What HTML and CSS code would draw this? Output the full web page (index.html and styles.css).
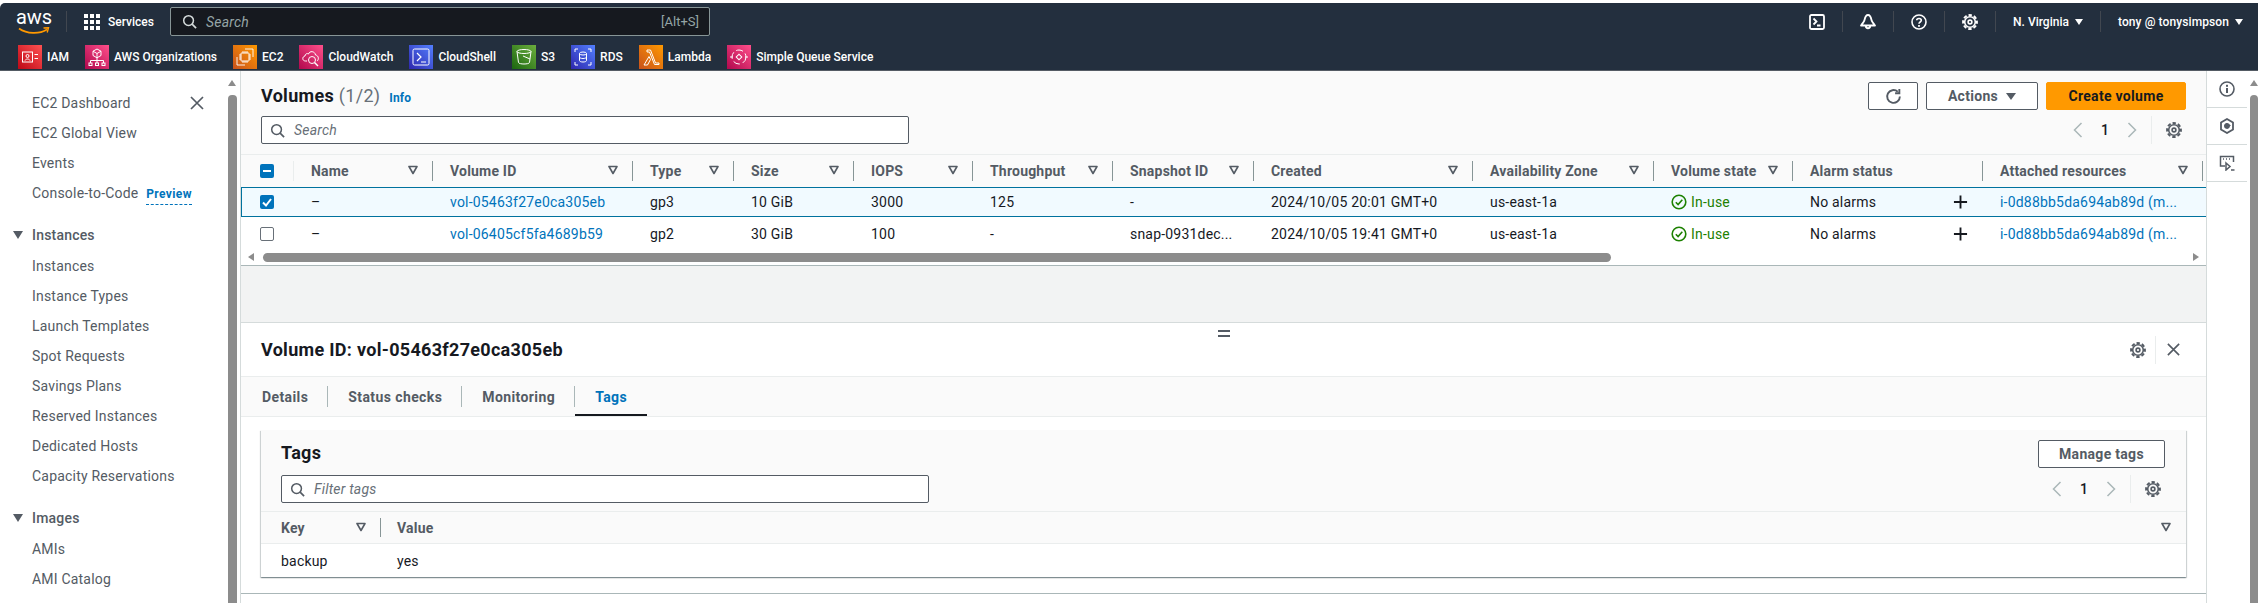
FILE: index.html
```html
<!DOCTYPE html>
<html>
<head>
<meta name="viewport" content="width=device-width, initial-scale=1">
<link rel="stylesheet" href="styles.css">
</head>
<body>

<svg class="defs" width="0" height="0">
  <defs>
    <symbol id="i-search" viewBox="0 0 16 16"><circle cx="7" cy="7" r="5.2" fill="none" stroke="currentColor" stroke-width="1.6"/><path d="M10.8 10.8L15 15" stroke="currentColor" stroke-width="1.8" fill="none"/></symbol>
    <symbol id="i-gear" viewBox="0 0 16 16"><circle cx="8" cy="8" r="5.3" fill="none" stroke="currentColor" stroke-width="1.6"/><circle cx="8" cy="8" r="6.9" fill="none" stroke="currentColor" stroke-width="2" stroke-dasharray="3.4 2.02" stroke-dashoffset="1.7"/><circle cx="8" cy="8" r="1.9" fill="none" stroke="currentColor" stroke-width="1.6"/></symbol>
    <symbol id="i-filter" viewBox="0 0 10 10"><path d="M1 1.5h8L5 8.5z" fill="none" stroke="currentColor" stroke-width="1.6" stroke-linejoin="round"/></symbol>
    <symbol id="i-close" viewBox="0 0 16 16"><path d="M2 2l12 12M14 2L2 14" stroke="currentColor" stroke-width="1.7" fill="none"/></symbol>
    <symbol id="i-left" viewBox="0 0 10 16"><path d="M8.5 1L1.5 8l7 7" stroke="currentColor" stroke-width="1.5" fill="none"/></symbol>
    <symbol id="i-right" viewBox="0 0 10 16"><path d="M1.5 1l7 7-7 7" stroke="currentColor" stroke-width="1.5" fill="none"/></symbol>
    <symbol id="i-ok" viewBox="0 0 16 16"><circle cx="8" cy="8" r="6.8" fill="none" stroke="currentColor" stroke-width="1.6"/><path d="M4.8 8.2l2.3 2.3 4.2-4.7" fill="none" stroke="currentColor" stroke-width="1.6"/></symbol>
    <symbol id="i-plus" viewBox="0 0 16 16"><path d="M8 1v14M1 8h14" stroke="currentColor" stroke-width="2" fill="none"/></symbol>
  </defs>
</svg>

<header class="topnav">
  <div class="nav-row">
    <div class="logo">
      <span class="logo-text">aws</span>
      <svg class="logo-smile" width="32" height="8" viewBox="0 0 32 8"><path d="M1 1.5c8 5.5 20 6 28 1" fill="none" stroke="#f90" stroke-width="1.8"/><path d="M25.5 1l5-.3-1.3 4.8" fill="none" stroke="#f90" stroke-width="1.4"/></svg>
    </div>
    <span class="nav-sep nav-sep-logo"></span>
    <svg class="grid-icon" width="16" height="16" viewBox="0 0 16 16" fill="#fff"><rect width="4" height="4"/><rect x="6" width="4" height="4"/><rect x="12" width="4" height="4"/><rect y="6" width="4" height="4"/><rect x="6" y="6" width="4" height="4"/><rect x="12" y="6" width="4" height="4"/><rect y="12" width="4" height="4"/><rect x="6" y="12" width="4" height="4"/><rect x="12" y="12" width="4" height="4"/></svg>
    <span class="nav-services">Services</span>
    <div class="nav-search">
      <svg width="15" height="15"><use href="#i-search"/></svg>
      <span class="nav-search-text">Search</span>
      <span class="nav-search-key">[Alt+S]</span>
    </div>
    <div class="nav-right">
      <svg class="nav-icon" width="16" height="16" viewBox="0 0 16 16"><rect x="1" y="1" width="14" height="14" rx="1.5" fill="none" stroke="#fff" stroke-width="1.8"/><path d="M4.5 4.5L7.5 7.5l-3 3M8 11.5h3.5" fill="none" stroke="#fff" stroke-width="1.8"/></svg>
      <span class="nav-sep"></span>
      <svg class="nav-icon" width="16" height="16" viewBox="0 0 16 16"><path d="M8 1c2.5 0 3 2.500 3.500 5 .3 1.500 1.500 3 3.500 5.500H1C3 9 4.200 7.500 4.500 6 5 3.500 5.500 1 8 1zM5.800 12c0 3 4.400 3 4.400 0" fill="none" stroke="#fff" stroke-width="1.800" stroke-linejoin="round"/></svg>
      <span class="nav-sep"></span>
      <svg class="nav-icon" width="16" height="16" viewBox="0 0 16 16"><circle cx="8" cy="8" r="7" fill="none" stroke="#fff" stroke-width="1.6"/><path d="M5.700 6.300C5.700 3.800 10.300 3.800 10.300 6.300 10.300 8 8 8 8 9.800" fill="none" stroke="#fff" stroke-width="1.6"/><rect x="7.100" y="11" width="1.800" height="1.800" fill="#fff"/></svg>
      <span class="nav-sep"></span>
      <svg class="nav-icon nav-gear" width="16" height="16"><use href="#i-gear"/></svg>
      <span class="nav-sep"></span>
      <span class="nav-menu">N. Virginia <i class="caret"></i></span>
      <span class="nav-sep"></span>
      <span class="nav-menu nav-user">tony @ tonysimpson <i class="caret"></i></span>
    </div>
  </div>
  <div class="fav-row">
    <div class="fav"><svg class="fav-icon" viewBox="0 0 24 24"><defs><linearGradient id="g-red" x1="0" y1="1" x2="1" y2="0"><stop offset="0" stop-color="#bd0816"/><stop offset="1" stop-color="#ff5252"/></linearGradient></defs><rect width="24" height="24" fill="url(#g-red)"/><rect x="4.500" y="7" width="10" height="10" fill="none" stroke="#fff"/><circle cx="9.500" cy="11" r="1.500" fill="none" stroke="#fff"/><path d="M7 15.500c1-2 4-2 5 0M16.500 9.500H20M16.500 13.500H20" stroke="#fff" fill="none"/></svg><span>IAM</span></div>
    <div class="fav"><svg class="fav-icon" viewBox="0 0 24 24"><defs><linearGradient id="g-pink" x1="0" y1="1" x2="1" y2="0"><stop offset="0" stop-color="#b0084d"/><stop offset="1" stop-color="#ff4f8b"/></linearGradient></defs><rect width="24" height="24" fill="url(#g-pink)"/><path d="M12 4l4 2.200v4.300L12 12.800 8 10.500V6.200zM8 6.200l4 2.300 4-2.300M12 8.500v4.300M12 12.800v2.700M5.500 18v-2.500h13V18M12 15.500V18" fill="none" stroke="#fff"/><rect x="4" y="18" width="3" height="2.500" fill="none" stroke="#fff"/><rect x="10.500" y="18" width="3" height="2.500" fill="none" stroke="#fff"/><rect x="17" y="18" width="3" height="2.500" fill="none" stroke="#fff"/></svg><span>AWS Organizations</span></div>
    <div class="fav"><svg class="fav-icon" viewBox="0 0 24 24"><defs><linearGradient id="g-orange" x1="0" y1="1" x2="1" y2="0"><stop offset="0" stop-color="#c8511b"/><stop offset="1" stop-color="#f90"/></linearGradient></defs><rect width="24" height="24" fill="url(#g-orange)"/><rect x="8" y="8" width="8" height="8" rx=".5" fill="none" stroke="#fff"/><path d="M10 6v2M12 6v2M14 6v2M10 16v2M12 16v2M14 16v2M6 10h2M6 12h2M6 14h2M16 10h2M16 12h2M16 14h2M4 12v8h8M12 4h8v8" fill="none" stroke="#fff" stroke-width=".9"/></svg><span>EC2</span></div>
    <div class="fav"><svg class="fav-icon" viewBox="0 0 24 24"><rect width="24" height="24" fill="url(#g-pink)"/><path d="M8 16H6.500C3 16 3 11.500 6 11c0-2 2-3 3.500-2 1-3.500 6.500-3 7 1 3.500.5 3.500 5 1.500 6" fill="none" stroke="#fff"/><circle cx="13" cy="15" r="3.500" fill="none" stroke="#fff"/><path d="M15.500 17.500L19 21" stroke="#fff" stroke-width="1.400"/></svg><span>CloudWatch</span></div>
    <div class="fav"><svg class="fav-icon" viewBox="0 0 24 24"><defs><linearGradient id="g-blue" x1="0" y1="1" x2="1" y2="0"><stop offset="0" stop-color="#2e27ad"/><stop offset="1" stop-color="#527fff"/></linearGradient></defs><rect width="24" height="24" fill="url(#g-blue)"/><rect x="4" y="4" width="16" height="16" rx="1.500" fill="none" stroke="#fff"/><path d="M8 8l4 4-4 4M12 17h5" fill="none" stroke="#fff" stroke-width="1.200"/></svg><span>CloudShell</span></div>
    <div class="fav"><svg class="fav-icon" viewBox="0 0 24 24"><defs><linearGradient id="g-green" x1="0" y1="1" x2="1" y2="0"><stop offset="0" stop-color="#1b660f"/><stop offset="1" stop-color="#6cae3e"/></linearGradient></defs><rect width="24" height="24" fill="url(#g-green)"/><ellipse cx="12" cy="6.500" rx="7" ry="2" fill="none" stroke="#fff"/><path d="M5 6.500l1.500 11c.5 2 10.500 2 11 0l1.500-11M11 11l7 3" fill="none" stroke="#fff"/></svg><span>S3</span></div>
    <div class="fav"><svg class="fav-icon" viewBox="0 0 24 24"><rect width="24" height="24" fill="url(#g-blue)"/><ellipse cx="12" cy="8.500" rx="3.500" ry="1.500" fill="none" stroke="#fff"/><path d="M8.500 8.500v7c0 2 7 2 7 0v-7M8.500 12c0 2 7 2 7 0M4 7V4h3M20 7V4h-3M4 17v3h3M20 17v3h-3" fill="none" stroke="#fff"/></svg><span>RDS</span></div>
    <div class="fav"><svg class="fav-icon" viewBox="0 0 24 24"><rect width="24" height="24" fill="url(#g-orange)"/><path d="M8 5h3.500l5 13H20v1.500h-4.500L10.500 7H8zM10 11.500l1.500 3L8.500 20H5z" fill="none" stroke="#fff"/></svg><span>Lambda</span></div>
    <div class="fav"><svg class="fav-icon" viewBox="0 0 24 24"><rect width="24" height="24" fill="url(#g-pink)"/><circle cx="12" cy="12" r="7" fill="none" stroke="#fff" stroke-dasharray="7 3"/><rect x="10" y="10" width="4" height="4" fill="none" stroke="#fff" transform="rotate(45 12 12)"/><path d="M3 12h3M18 12h3" stroke="#fff"/></svg><span>Simple Queue Service</span></div>
  </div>
</header>

<div class="app">
  <aside class="sidebar">
    <nav class="side-nav">
      <div class="side-close"><svg width="16" height="16"><use href="#i-close"/></svg></div>
      <a class="side-link">EC2 Dashboard</a>
      <a class="side-link">EC2 Global View</a>
      <a class="side-link">Events</a>
      <a class="side-link">Console-to-Code <b class="preview">Preview</b></a>
      <div class="side-head"><i class="side-caret"></i>Instances</div>
      <a class="side-link">Instances</a>
      <a class="side-link">Instance Types</a>
      <a class="side-link">Launch Templates</a>
      <a class="side-link">Spot Requests</a>
      <a class="side-link">Savings Plans</a>
      <a class="side-link">Reserved Instances</a>
      <a class="side-link">Dedicated Hosts</a>
      <a class="side-link">Capacity Reservations</a>
      <div class="side-head"><i class="side-caret"></i>Images</div>
      <a class="side-link">AMIs</a>
      <a class="side-link">AMI Catalog</a>
    </nav>
    <div class="scroll-v"><i class="arrow-up"></i><i class="scroll-thumb"></i></div>
  </aside>

  <main class="main">
    <section class="list-panel">
      <div class="list-head">
        <h1 class="title">Volumes <span class="count">(1/2)</span> <a class="info">Info</a></h1>
        <div class="actions">
          <button class="btn btn-refresh"><svg width="17" height="17" viewBox="0 0 16 16"><path d="M14 8a6 6 0 1 1-2-4.500" fill="none" stroke="#545b64" stroke-width="1.800"/><path d="M13.500 1v4h-4" fill="none" stroke="#545b64" stroke-width="1.800"/></svg></button>
          <button class="btn btn-actions">Actions <i class="caret caret-gray"></i></button>
          <button class="btn btn-primary">Create volume</button>
        </div>
      </div>
      <div class="tool-row">
        <div class="search search-wide"><svg width="15" height="15"><use href="#i-search"/></svg><span>Search</span></div>
        <div class="pager">
          <svg width="10" height="16"><use href="#i-left"/></svg>
          <span class="pg-num">1</span>
          <svg width="10" height="16"><use href="#i-right"/></svg>
          <span class="pg-sep"></span>
          <svg class="pg-gear" width="16" height="16"><use href="#i-gear"/></svg>
        </div>
      </div>
      <div class="vtable">
        <div class="vrow vhead">
          <div class="cell cell-check sep-light"><span class="check check-on"><i class="dash"></i></span></div>
          <div class="cell sep">Name<svg class="flt" width="10" height="10"><use href="#i-filter"/></svg></div>
          <div class="cell sep">Volume ID<svg class="flt" width="10" height="10"><use href="#i-filter"/></svg></div>
          <div class="cell sep">Type<svg class="flt" width="10" height="10"><use href="#i-filter"/></svg></div>
          <div class="cell sep">Size<svg class="flt" width="10" height="10"><use href="#i-filter"/></svg></div>
          <div class="cell sep">IOPS<svg class="flt" width="10" height="10"><use href="#i-filter"/></svg></div>
          <div class="cell sep">Throughput<svg class="flt" width="10" height="10"><use href="#i-filter"/></svg></div>
          <div class="cell sep">Snapshot ID<svg class="flt" width="10" height="10"><use href="#i-filter"/></svg></div>
          <div class="cell sep">Created<svg class="flt" width="10" height="10"><use href="#i-filter"/></svg></div>
          <div class="cell sep">Availability Zone<svg class="flt" width="10" height="10"><use href="#i-filter"/></svg></div>
          <div class="cell sep">Volume state<svg class="flt" width="10" height="10"><use href="#i-filter"/></svg></div>
          <div class="cell sep">Alarm status</div>
          <div class="cell sep">Attached resources<svg class="flt" width="10" height="10"><use href="#i-filter"/></svg></div>
        </div>
        <div class="vrow vdata vselected">
          <div class="cell cell-check"><span class="check check-on"><svg width="14" height="14" viewBox="0 0 14 14"><path d="M3 7.500l3 3 5-6.500" fill="none" stroke="#fff" stroke-width="2"/></svg></span></div>
          <div class="cell">–</div>
          <div class="cell"><a class="link">vol-05463f27e0ca305eb</a></div>
          <div class="cell">gp3</div>
          <div class="cell">10 GiB</div>
          <div class="cell">3000</div>
          <div class="cell">125</div>
          <div class="cell">-</div>
          <div class="cell">2024/10/05 20:01 GMT+0</div>
          <div class="cell">us-east-1a</div>
          <div class="cell state"><svg width="16" height="16"><use href="#i-ok"/></svg>In-use</div>
          <div class="cell">No alarms<svg class="plus" width="15" height="15"><use href="#i-plus"/></svg></div>
          <div class="cell"><a class="link">i-0d88bb5da694ab89d (m...</a></div>
        </div>
        <div class="vrow vdata vlast">
          <div class="cell cell-check"><span class="check"></span></div>
          <div class="cell">–</div>
          <div class="cell"><a class="link">vol-06405cf5fa4689b59</a></div>
          <div class="cell">gp2</div>
          <div class="cell">30 GiB</div>
          <div class="cell">100</div>
          <div class="cell">-</div>
          <div class="cell">snap-0931dec...</div>
          <div class="cell">2024/10/05 19:41 GMT+0</div>
          <div class="cell">us-east-1a</div>
          <div class="cell state"><svg width="16" height="16"><use href="#i-ok"/></svg>In-use</div>
          <div class="cell">No alarms<svg class="plus" width="15" height="15"><use href="#i-plus"/></svg></div>
          <div class="cell"><a class="link">i-0d88bb5da694ab89d (m...</a></div>
        </div>
      </div>
      <div class="scroll-h"><i class="arrow-left"></i><i class="scroll-hthumb"></i><i class="arrow-right"></i></div>
    </section>

    <div class="gap"></div>

    <section class="detail">
      <div class="handle"></div>
      <div class="detail-head">
        <h2 class="title">Volume ID: vol-05463f27e0ca305eb</h2>
        <div class="detail-tools">
          <svg width="16" height="16"><use href="#i-gear"/></svg>
          <span class="pg-sep detail-sep"></span>
          <svg width="15" height="15"><use href="#i-close"/></svg>
        </div>
      </div>
      <div class="tabs">
        <a class="tab">Details</a>
        <a class="tab">Status checks</a>
        <a class="tab">Monitoring</a>
        <a class="tab tab-active">Tags</a>
      </div>
      <div class="card">
        <div class="card-head">
          <div class="card-left">
            <h3 class="title">Tags</h3>
            <div class="search search-wide"><svg width="15" height="15"><use href="#i-search"/></svg><span>Filter tags</span></div>
          </div>
          <div class="card-right">
            <button class="btn btn-manage">Manage tags</button>
            <div class="pager">
              <svg width="10" height="16"><use href="#i-left"/></svg>
              <span class="pg-num">1</span>
              <svg width="10" height="16"><use href="#i-right"/></svg>
              <span class="pg-sep"></span>
              <svg class="pg-gear" width="16" height="16"><use href="#i-gear"/></svg>
            </div>
          </div>
        </div>
        <div class="trow thead">
          <div class="tcell sep">Key<svg class="flt" width="10" height="10"><use href="#i-filter"/></svg></div>
          <div class="tcell">Value<svg class="flt" width="10" height="10"><use href="#i-filter"/></svg></div>
        </div>
        <div class="trow tdata">
          <div class="tcell">backup</div>
          <div class="tcell">yes</div>
        </div>
      </div>
      <div class="detail-line"></div>
    </section>
  </main>

  <aside class="tools">
    <div class="tools-list">
      <div class="tool-item"><svg width="16" height="16" viewBox="0 0 16 16"><circle cx="8" cy="8" r="7" fill="none" stroke="#545b64" stroke-width="1.600"/><path d="M8 7v5" stroke="#545b64" stroke-width="2"/><rect x="7" y="3.800" width="2" height="2" fill="#545b64"/></svg></div>
      <div class="tool-item"><svg width="16" height="16" viewBox="0 0 16 16"><path d="M8 1l6 3.500v7L8 15l-6-3.500v-7z" fill="none" stroke="#545b64" stroke-width="1.800"/><path d="M11 8a3 3 0 1 1-1-2.300L12 8z" fill="#545b64"/></svg></div>
      <div class="tool-item"><svg width="16" height="16" viewBox="0 0 16 16"><path d="M6 11H1.500V1.500h13V7" fill="none" stroke="#545b64" stroke-width="1.500"/><path d="M4 4h1M7 4h1M10 4h1" stroke="#545b64" stroke-width="1.500"/><path d="M7 8l4 3.500-4 3.500zM12 15h3.500" fill="none" stroke="#545b64" stroke-width="1.500"/></svg></div>
    </div>
    <div class="scroll-v scroll-right"><i class="arrow-up"></i><i class="scroll-thumb"></i></div>
  </aside>
</div>

</body>
</html>
```

FILE: styles.css
```css
* {
  box-sizing: border-box;
}

html, body {
  height: 100%;
}

body {
  margin: 0;
  padding-top: 3px;
  background: #fff;
  color: #16191f;
  font-family: Roboto, "Liberation Sans", Arial, sans-serif;
  font-size: 14px;
  letter-spacing: 0.2px;
  overflow: hidden;
  display: flex;
  flex-direction: column;
}

.defs {
  position: absolute;
}

button {
  font-family: inherit;
  letter-spacing: inherit;
}

h1, h2, h3 {
  margin: 0;
}

/* top nav */
.topnav {
  height: 68px;
  flex: none;
  background: #232f3e;
  border-radius: 5px 0 0 0;
  border-bottom: 1px solid #545b64;
  color: #fff;
  letter-spacing: 0;
}

.nav-row {
  height: 37px;
  display: flex;
  align-items: center;
  padding-left: 18px;
}

.logo {
  width: 32px;
  height: 27px;
  display: flex;
  flex-direction: column;
  align-items: center;
}

.logo-text {
  font-size: 20px;
  line-height: 19px;
}

.nav-sep {
  width: 1px;
  height: 21px;
  background: #414750;
  flex: none;
}

.nav-sep-logo {
  margin: 0 17px 0 16px;
}

.nav-services {
  margin-left: 8px;
  width: 46px;
  font-size: 12px;
  font-weight: 500;
}

.nav-search {
  margin-left: 16px;
  width: 540px;
  height: 29px;
  display: flex;
  align-items: center;
  padding: 0 10px 0 11px;
  background: #16191f;
  border: 1px solid #879596;
  border-radius: 2px;
  color: #d5dbdb;
}

.nav-search-text {
  margin-left: 9px;
  font-style: italic;
  color: #95a5a6;
  letter-spacing: 0.2px;
}

.nav-search-key {
  margin-left: auto;
  color: #95a5a6;
  font-size: 13px;
}

.nav-right {
  margin-left: auto;
  display: flex;
  align-items: center;
  font-size: 12px;
  padding-right: 15px;
}

.nav-right .nav-sep {
  margin: 0 17px;
}

.nav-menu {
  font-weight: 500;
  display: flex;
  align-items: center;
  gap: 6px;
}

.nav-user {
  letter-spacing: 0.1px;
}

.caret {
  width: 0;
  height: 0;
  border-left: 4px solid transparent;
  border-right: 4px solid transparent;
  border-top: 6px solid #fff;
}

.caret-gray {
  border-left-width: 5px;
  border-right-width: 5px;
  border-top: 7px solid #545b64;
  margin-left: 8px;
}

.fav-row {
  height: 30px;
  padding: 5px 0 0 18px;
  display: flex;
  align-items: flex-start;
  gap: 16px;
  font-size: 12px;
  font-weight: 500;
}

.fav {
  display: flex;
  align-items: center;
  gap: 5px;
  height: 24px;
}

.fav-icon {
  width: 24px;
  height: 24px;
  flex: none;
}

/* page body */
.app {
  flex: 1;
  min-height: 0;
  display: flex;
}

.sidebar {
  width: 241px;
  flex: none;
  display: flex;
  border-right: 1px solid #d5dbdb;
  padding-right: 3px;
}

.side-nav {
  flex: 1;
  padding: 17px 0 0 32px;
  position: relative;
  color: #545b64;
}

.side-close {
  position: absolute;
  right: 23px;
  top: 24px;
}

.side-link {
  display: block;
  height: 30px;
  line-height: 30px;
  white-space: nowrap;
}

.preview {
  margin-left: 4px;
  color: #0073bb;
  font-size: 12px;
  font-weight: 700;
  letter-spacing: 0.4px;
  border-bottom: 1px dashed #0073bb;
  padding-bottom: 3px;
}

.side-head {
  margin-top: 12px;
  height: 31px;
  line-height: 30px;
  font-weight: 500;
  position: relative;
}

.side-caret {
  position: absolute;
  left: -19px;
  top: 11px;
  border-left: 5px solid transparent;
  border-right: 5px solid transparent;
  border-top: 8px solid #545b64;
}

.scroll-v {
  width: 9px;
  flex: none;
  position: relative;
  padding-top: 24px;
}

.arrow-up {
  position: absolute;
  top: 9px;
  left: 0;
  border-left: 4.5px solid transparent;
  border-right: 4.5px solid transparent;
  border-bottom: 6px solid #8c8c8c;
}

.scroll-thumb {
  display: block;
  height: 100%;
  background: #8c8c8c;
  border-radius: 4px 4px 0 0;
}

.main {
  flex: 1;
  min-width: 0;
  display: flex;
  flex-direction: column;
  background: #f2f3f3;
}

.list-panel {
  background: #fafafa;
  border-bottom: 1px solid #aab7b8;
  height: 195px;
  flex: none;
}

.list-head {
  height: 45px;
  display: flex;
  align-items: flex-end;
  justify-content: space-between;
  padding: 0 20px;
}

.title {
  font-size: 18px;
  font-weight: 700;
  letter-spacing: 0.3px;
  color: #16191f;
}

.count {
  font-weight: 400;
  color: #687078;
}

.info {
  margin-left: 4px;
  font-size: 12px;
  font-weight: 700;
  letter-spacing: 0.2px;
  color: #0073bb;
}

.list-head .title {
  align-self: center;
  margin-top: 4px;
}

.actions {
  display: flex;
  gap: 8px;
  height: 28px;
  margin-bottom: 6px;
}

.btn {
  height: 28px;
  border: 1px solid #545b64;
  border-radius: 2px;
  background: #fff;
  color: #545b64;
  font-size: 14px;
  font-weight: 700;
  letter-spacing: 0.3px;
  display: flex;
  align-items: center;
  justify-content: center;
  padding: 0;
}

.btn-refresh {
  width: 50px;
}

.btn-actions {
  width: 112px;
}

.btn-primary {
  width: 140px;
  background: #ff9900;
  border-color: #ff9900;
  color: #16191f;
}

.btn-manage {
  width: 127px;
}

.tool-row {
  height: 38px;
  display: flex;
  justify-content: space-between;
  padding: 0 20px;
}

.search {
  height: 28px;
  display: flex;
  align-items: center;
  gap: 9px;
  padding-left: 8px;
  background: #fff;
  border: 1px solid #545b64;
  border-radius: 2px;
  color: #545b64;
}

.search span {
  font-style: italic;
  color: #687078;
}

.search-wide {
  width: 648px;
}

.pager {
  display: flex;
  align-items: center;
  height: 28px;
  color: #aab7b8;
  padding-right: 4px;
}

.pg-num {
  width: 44px;
  text-align: center;
  color: #16191f;
  font-weight: 500;
}

.pg-sep {
  width: 1px;
  height: 28px;
  background: #eaeded;
  margin: 0 14px;
}

.pg-gear {
  color: #545b64;
}

/* volumes table */
.vtable {
  border-top: 1px solid #eaeded;
}

.vrow {
  display: grid;
  grid-template-columns: 53px 139px 200px 101px 120px 119px 140px 141px 219px 181px 139px 190px 220px;
}

.vhead {
  height: 32px;
  font-weight: 700;
  color: #545b64;
}

.vdata {
  height: 30px;
  background: #fff;
}

.vlast {
  height: 33px;
}

.vselected {
  background: #f1faff;
  box-shadow: inset 1px 1px 0 #00729e, inset 0 -1px 0 #00729e;
}

.cell {
  display: flex;
  align-items: center;
  padding-left: 17px;
  white-space: nowrap;
  position: relative;
  min-width: 0;
}

.cell-check {
  padding-left: 19px;
}

.sep::after {
  content: "";
  position: absolute;
  right: 0;
  top: 6px;
  bottom: 6px;
  width: 1px;
  background: #879596;
}

.sep-light::after {
  content: "";
  position: absolute;
  right: 0;
  top: 6px;
  bottom: 6px;
  width: 1px;
  background: #eaeded;
}

.flt {
  position: absolute;
  right: 15px;
  top: 10px;
  color: #545b64;
}

.check {
  width: 14px;
  height: 14px;
  border: 1px solid #687078;
  border-radius: 2px;
  background: #fff;
  display: flex;
  align-items: center;
  justify-content: center;
}

.check-on {
  background: #0073bb;
  border: none;
}

.dash {
  width: 8px;
  height: 2px;
  background: #fff;
}

.link {
  color: #0073bb;
}

.state {
  color: #1d8102;
  gap: 4px;
}

.plus {
  position: absolute;
  right: 15px;
  top: 50%;
  transform: translateY(-50%);
  color: #16191f;
}

/* scrollbar under the table */
.scroll-h {
  height: 15px;
  padding-top: 3px;
  background: #fff;
  position: relative;
}

.scroll-hthumb {
  display: block;
  margin-left: 22px;
  width: 1348px;
  height: 9px;
  background: #8c8c8c;
  border-radius: 5px;
}

.arrow-left {
  position: absolute;
  left: 7px;
  top: 3px;
  border-top: 4.5px solid transparent;
  border-bottom: 4.5px solid transparent;
  border-right: 6px solid #8c8c8c;
}

.arrow-right {
  position: absolute;
  right: 7px;
  top: 3px;
  border-top: 4.5px solid transparent;
  border-bottom: 4.5px solid transparent;
  border-left: 6px solid #8c8c8c;
}

.gap {
  height: 56px;
  flex: none;
}

/* lower split panel */
.detail {
  flex: 1;
  min-height: 0;
  background: #fff;
  border-top: 1px solid #d5dbdb;
  position: relative;
}

.handle {
  position: absolute;
  left: 977px;
  top: 7px;
  width: 12px;
  height: 7px;
  border-top: 2px solid #545b64;
  border-bottom: 2px solid #545b64;
}

.detail-head {
  height: 53px;
  display: flex;
  align-items: center;
  justify-content: space-between;
  padding: 0 25px 0 20px;
}

.detail-tools {
  display: flex;
  align-items: center;
  color: #545b64;
}

.detail-sep {
  margin: 0 10px 0 9px;
}

.tabs {
  height: 41px;
  display: flex;
  background: #fafafa;
  border-top: 1px solid #eaeded;
  border-bottom: 1px solid #eaeded;
  padding-left: 1px;
}

.tab {
  height: 39px;
  display: flex;
  align-items: center;
  padding: 0 20px;
  font-weight: 700;
  letter-spacing: 0.4px;
  color: #545b64;
  position: relative;
}

.tab:not(:last-child)::after {
  content: "";
  position: absolute;
  right: 0;
  top: 9px;
  bottom: 9px;
  width: 1px;
  background: #aab7b8;
}

.tab-active {
  color: #0073bb;
  border-bottom: 2px solid #16191f;
  padding-top: 2px;
}

.card {
  margin: 13px 20px 0 20px;
  height: 147px;
  background: #fff;
  box-shadow: 0 1px 1px 0 rgba(0, 28, 36, 0.3), 1px 1px 1px 0 rgba(0, 28, 36, 0.15), -1px 1px 1px 0 rgba(0, 28, 36, 0.15);
}

.card-head {
  height: 82px;
  background: #fafafa;
  border-bottom: 1px solid #eaeded;
  display: flex;
  justify-content: space-between;
  padding: 10px 21px 0 20px;
}

.card-left .title {
  height: 35px;
  line-height: 26px;
}

.card-right {
  display: flex;
  flex-direction: column;
  align-items: flex-end;
  gap: 7px;
}

.trow {
  display: grid;
  grid-template-columns: 120px 1fr;
}

.thead {
  height: 32px;
  background: #fafafa;
  border-bottom: 1px solid #eaeded;
  font-weight: 700;
  color: #545b64;
}

.tdata {
  height: 33px;
}

.tcell {
  display: flex;
  align-items: center;
  padding-left: 20px;
  position: relative;
}

.tcell + .tcell {
  padding-left: 16px;
}

.detail-line {
  margin-top: 16px;
  height: 1px;
  background: #aab7b8;
}

/* right tools */
.tools {
  width: 52px;
  flex: none;
  display: flex;
  border-left: 1px solid #d5dbdb;
}

.tools-list {
  width: 40px;
  flex: none;
  margin-right: 3px;
}

.tool-item {
  height: 37px;
  display: flex;
  align-items: center;
  justify-content: center;
  border-bottom: 1px solid #d5dbdb;
}

.scroll-right {
  width: 8px;
}
```
